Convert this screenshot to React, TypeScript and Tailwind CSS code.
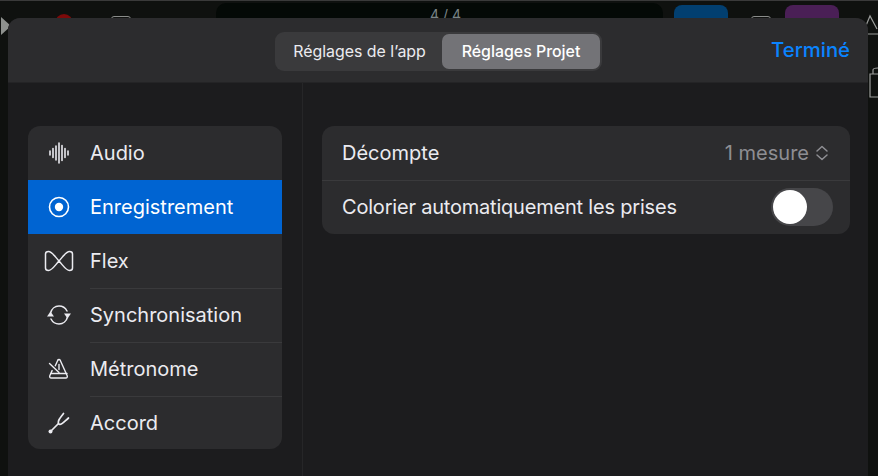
import React from "react";

const font = { fontFamily: "Inter, 'Liberation Sans', sans-serif" };

function AudioIcon() {
  return (
    <svg width="22" height="22" viewBox="0 0 22 22" fill="none" stroke="currentColor" strokeWidth="1.6" strokeLinecap="round">
      <path d="M2 9v4M5 6.500v9M8 4v14M11 1v20M14 3.500v15M17 6.500v9M20 9v4" />
    </svg>
  );
}
function RecordIcon() {
  return (
    <svg width="22" height="22" viewBox="0 0 22 22" fill="none">
      <circle cx="11" cy="11" r="9.500" stroke="currentColor" strokeWidth="1.600" />
      <circle cx="11" cy="11" r="4.200" fill="currentColor" />
    </svg>
  );
}
function FlexIcon() {
  return (
    <svg width="30" height="24" viewBox="0 0 30 24" fill="none" stroke="currentColor" strokeWidth="1.500" strokeLinejoin="round">
      <path d="M25.500 21.500C22 21.500 19.500 17 15 12C10.500 7 8 2.500 4.500 2.500C2.500 2.500 1.500 3.500 1.500 5V19C1.500 20.500 2.500 21.500 4.500 21.500C8 21.500 10.500 17 15 12C19.500 7 22 2.500 25.500 2.500C27.500 2.500 28.500 3.500 28.500 5V19C28.500 20.500 27.500 21.500 25.500 21.500Z" />
    </svg>
  );
}
function SyncIcon() {
  return (
    <svg width="26" height="22" viewBox="0 0 26 22" fill="none">
      <path d="M4.500 9C5.500 5 8.800 2 13 2c3.500 0 6.500 2 8 5" stroke="currentColor" strokeWidth="1.500" strokeLinecap="round" />
      <path d="M21.500 13C20.500 17 17.200 20 13 20c-3.500 0-6.500-2-8-5" stroke="currentColor" strokeWidth="1.500" strokeLinecap="round" />
      <path d="M1 12.500 4.500 7.500 8 12.500zM18 9.500h7L21.500 14.500z" fill="currentColor" />
    </svg>
  );
}
function MetronomeIcon() {
  return (
    <svg width="22" height="22" viewBox="0 0 22 22" fill="none" stroke="currentColor" strokeWidth="1.400" strokeLinecap="round" strokeLinejoin="round">
      <path d="M9.800 2.200c.6-.9 1.800-.9 2.400 0l7 15.600c.4 1-.2 2.200-1.400 2.200H3.200c-1.200 0-1.800-1.200-1.400-2.200l2.300-5.200" />
      <path d="M9.800 2.200 7.300 7.800" />
      <path d="M3 15.500h16" />
      <path d="M11 6.500v5" />
      <path d="M1.500 5.500 11 14.500" />
    </svg>
  );
}
function ForkIcon() {
  return (
    <svg width="24" height="24" viewBox="0 0 24 24" fill="none" stroke="currentColor" strokeWidth="1.700" strokeLinecap="round" strokeLinejoin="round">
      <path d="M3.500 20.500 11.500 12.500" />
      <path d="M16.500 2.500C14 6 12 8 11.500 10C11 12 11.500 13.500 13 13.500C15 13.500 17 11 21.500 7" />
      <circle cx="3.500" cy="20.500" r="2" fill="currentColor" stroke="none" />
    </svg>
  );
}

const items = [
  { label: "Audio", icon: <AudioIcon /> },
  { label: "Enregistrement", icon: <RecordIcon />, active: true },
  { label: "Flex", icon: <FlexIcon /> },
  { label: "Synchronisation", icon: <SyncIcon /> },
  { label: "Métronome", icon: <MetronomeIcon /> },
  { label: "Accord", icon: <ForkIcon /> },
];

function Backdrop() {
  return (
    <div className="relative h-full w-full bg-[#0f110f] border-t border-[#3a3a3a]">
      <div className="flex h-[17px] items-start">
        <div className="mt-[16px] ml-px w-0 h-0 border-y-[9px] border-y-transparent border-l-[10px] border-l-[#8e918e]" />
        <div className="mt-[13px] ml-[44px] w-[18px] h-[18px] rounded-full bg-[#7c0a0a]" />
        <div className="mt-[15px] ml-[38px] w-[20px] h-[16px] rounded-[3px] border border-[#8a8c8a]" />
        <div className="ml-[85px] mt-[2px] w-[447px] h-[40px] rounded-[10px] bg-[#040906] text-[#7a8486] text-[14px] text-center leading-[24px] pl-[12px]">4 / 4</div>
        <div className="ml-[11px] mt-[4px] w-[54px] h-[30px] rounded-[8px] bg-[#023f70]" />
        <div className="ml-[23px] mt-[15px] w-[20px] h-[16px] rounded-[3px] border border-[#8a8c8a]" />
        <div className="ml-[14px] mt-[4px] w-[54px] h-[30px] rounded-[8px] bg-[#4a1f56]" />
      </div>
      <svg className="absolute right-0 top-[13px] text-[#9a9c9a]" width="14" height="86" viewBox="0 0 14 86" fill="none" stroke="currentColor" strokeWidth="1.200">
        <path d="M1 14 6 2 13 15M1 20H14" />
        <path d="M14 60H6V83H14M9 60V56C9 54 11 54 14 54" />
      </svg>
    </div>
  );
}

export default function App() {
  return (
    <div className="relative w-[878px] h-[476px] overflow-hidden" style={font}>
      <Backdrop />
      <div className="absolute left-[8px] top-[18px] w-[860px] h-[458px] flex flex-col rounded-t-[12px] overflow-hidden bg-[#1c1c1e]">
        <header className="relative h-[65px] shrink-0 flex items-start justify-end bg-[#2c2c2e] border-b border-[#242426]">
          <div className="absolute left-[267px] top-[14px] w-[327px] h-[39px] rounded-[9px] bg-[#3a3a3c] flex items-center p-[2px] text-[15.9px] text-[#ebebf0]">
            <div className="flex-1 text-center pt-px">Réglages de l’app</div>
            <div className="w-[158px] h-[35px] rounded-[7px] bg-[#737377] flex items-center justify-center pt-px font-medium text-white">Réglages Projet</div>
          </div>
          <div className="mt-[20px] mr-[18px] text-[20.3px] leading-[24px] font-medium text-[#0a84ff]">Terminé</div>
        </header>
        <main className="flex flex-1 min-h-0">
          <nav className="w-[295px] shrink-0 border-r border-[#262628] pt-[43px] pl-[20px]">
            <div className="w-[254px] h-[323px] rounded-[12px] overflow-hidden bg-[#2c2c2e] text-[20px] text-[#ebebf0]">
              {items.map((it, i) => (
                <div key={it.label} className={`h-[54px] flex items-center ${it.active ? "bg-[#0064d2] text-white" : ""}`}>
                  <div className="w-[62px] shrink-0 flex justify-center">{it.icon}</div>
                  <div className={`flex-1 h-full flex items-center ${i > 0 && !it.active && !items[i - 1].active ? "shadow-[inset_0_1px_0_#3a3a3c]" : ""}`}>{it.label}</div>
                </div>
              ))}
            </div>
          </nav>
          <section className="flex-1 pt-[43px] pl-[19px] pr-[18px]">
            <div className="rounded-[12px] bg-[#2c2c2e] text-[20px] text-[#ebebf0]">
              <div className="h-[54px] flex items-center justify-between pl-[20px] pr-[21px]">
                <span>Décompte</span>
                <span className="flex items-center gap-[6px] text-[#8e8e93]">
                  1 mesure
                  <svg width="14" height="16" viewBox="0 0 14 16" fill="none" stroke="currentColor" strokeWidth="1.500" strokeLinecap="round" strokeLinejoin="round">
                    <path d="M2 6l5-4.500L12 6M2 10l5 4.500L12 10" />
                  </svg>
                </span>
              </div>
              <div className="h-[54px] flex items-center justify-between pl-[20px] pr-[17px] shadow-[inset_0_1px_0_#3a3a3c]">
                <span className="tracking-[-0.2px]">Colorier automatiquement les prises</span>
                <div className="w-[62px] h-[38px] rounded-full bg-[#464649] flex items-center pl-[2px]">
                  <div className="w-[34px] h-[34px] rounded-full bg-white" />
                </div>
              </div>
            </div>
          </section>
        </main>
      </div>
    </div>
  );
}
